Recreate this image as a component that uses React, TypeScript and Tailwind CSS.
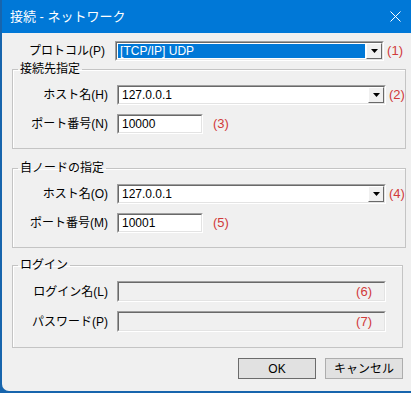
const font = "font-['Liberation_Sans','Noto_Sans_CJK_JP',sans-serif]";

function Note({ n }: { n: number }) {
  return <span className="ml-[3px] text-[13px] text-[#d03a3a]">({n})</span>;
}

function Sunken({ className = "", children }: { className?: string; children?: React.ReactNode }) {
  return (
    <div className={`border border-t-[#a0a0a0] border-l-[#a0a0a0] border-b-white border-r-white ${className}`}>
      <div className="flex h-full items-center border border-t-[#696969] border-l-[#696969] border-b-[#e3e3e3] border-r-[#e3e3e3]">
        {children}
      </div>
    </div>
  );
}

function Combo({ value, selected = false }: { value: string; selected?: boolean }) {
  return (
    <Sunken className="h-[20px] w-[269px] bg-white">
      <div className="flex h-full flex-1 items-center pl-[1px] pr-[1px]">
        <span
          className={`flex h-[14px] flex-1 items-center pl-[2px] text-[12px] ${
            selected ? "bg-[#0078d7] text-white" : "text-black"
          }`}
        >
          {value}
        </span>
      </div>
      <div className="flex h-[16px] w-[16px] items-center justify-center border border-t-white border-l-white border-b-[#696969] border-r-[#696969] bg-[#f0f0f0]">
        <svg width="7" height="4" viewBox="0 0 7 4">
          <path d="M0 0h7L3.5 4z" fill="#000" />
        </svg>
      </div>
    </Sunken>
  );
}

function Row({ label, children }: { label: string; children: React.ReactNode }) {
  return (
    <div className="flex items-center">
      <span className="w-[96px] pr-[1px] text-right text-[12px] text-black">{label}</span>
      <div className="ml-[8px] flex items-center">{children}</div>
    </div>
  );
}

function Group({ title, last = false, children }: { title: string; last?: boolean; children: React.ReactNode }) {
  return (
    <fieldset
      className={`border border-[#c4c4c4] px-0 pt-[8px] shadow-[inset_1px_1px_0_#fff] ${
        last ? "pb-[15px]" : "pb-[14px]"
      }`}
    >
      <legend className="ml-[5px] px-[2px] text-[12px] leading-[16px] text-black">{title}</legend>
      <div className="flex flex-col gap-[9px]">{children}</div>
    </fieldset>
  );
}

function Button({ label, primary = false }: { label: string; primary?: boolean }) {
  return (
    <div
      className={`flex h-[21px] w-[78px] items-center justify-center border text-[12px] text-black ${
        primary ? "border-[#6b6b6b]" : "border-[#adadad]"
      } bg-[#e1e1e1]`}
    >
      {label}
    </div>
  );
}

export default function App() {
  return (
    <div className={`h-[393px] w-[411px] overflow-hidden bg-[#1765ad] ${font}`}>
      <div className="ml-[2px] flex h-[391px] flex-col overflow-hidden rounded-bl-[7px] bg-[#f0f0f0]">
        <div className="flex h-[33px] items-center justify-between bg-[#0078d7] pl-[8px] pr-[10px] text-white">
          <span className="text-[13px]">接続 - ネットワーク</span>
          <svg width="11" height="11" viewBox="0 0 11 11">
            <path d="M0.5 0.5l10 10M10.5 0.5l-10 10" stroke="#fff" strokeWidth="1" />
          </svg>
        </div>

        <div className="flex flex-col pl-[10px] pr-[8px] pt-[8px]">
          <div className="flex items-center">
            <span className="w-[96px] pr-[1px] text-right text-[12px] text-black">プロトコル(P)</span>
            <div className="ml-[9px] flex items-center">
              <Combo value="[TCP/IP] UDP" selected />
              <Note n={1} />
            </div>
          </div>

          <Group title="接続先指定">
            <Row label="ホスト名(H)">
              <Combo value="127.0.0.1" />
              <Note n={2} />
            </Row>
            <Row label="ポート番号(N)">
              <Sunken className="h-[20px] w-[86px] bg-white">
                <span className="pl-[3px] text-[12px]">10000</span>
              </Sunken>
              <span className="ml-[10px] text-[13px] text-[#d03a3a]">(3)</span>
            </Row>
          </Group>

          <div className="mt-[11px]">
            <Group title="自ノードの指定">
              <Row label="ホスト名(O)">
                <Combo value="127.0.0.1" />
                <Note n={4} />
              </Row>
              <Row label="ポート番号(M)">
                <Sunken className="h-[20px] w-[86px] bg-white">
                  <span className="pl-[3px] text-[12px]">10001</span>
                </Sunken>
                <span className="ml-[10px] text-[13px] text-[#d03a3a]">(5)</span>
              </Row>
            </Group>
          </div>

          <div className="mt-[9px]">
            <Group title="ログイン" last>
              <Row label="ログイン名(L)">
                <Sunken className="h-[21px] w-[269px] bg-[#f0f0f0]">
                  <span className="ml-auto pr-[12px] text-[13px] text-[#d03a3a]">(6)</span>
                </Sunken>
              </Row>
              <Row label="パスワード(P)">
                <Sunken className="h-[21px] w-[269px] bg-[#f0f0f0]">
                  <span className="ml-auto pr-[12px] text-[13px] text-[#d03a3a]">(7)</span>
                </Sunken>
              </Row>
            </Group>
          </div>

          <div className="mt-[10px] flex justify-end gap-[9px]">
            <Button label="OK" primary />
            <Button label="キャンセル" />
          </div>
        </div>
      </div>
    </div>
  );
}
